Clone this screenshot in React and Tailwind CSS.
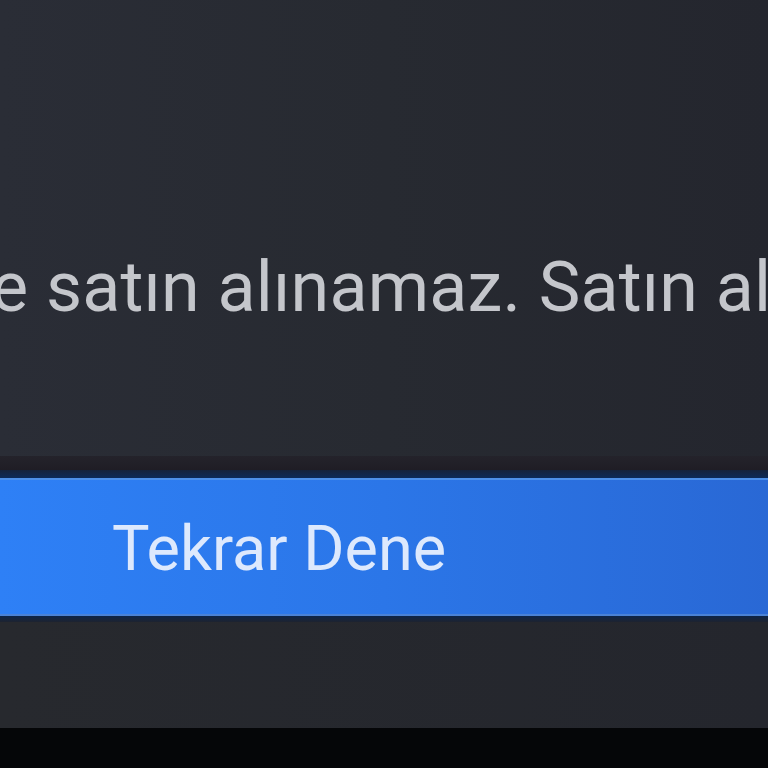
export default function App() {
  return (
    <div className="w-[768px] h-[768px] overflow-hidden flex flex-col bg-[#050608] font-['Roboto',sans-serif]">
      <div className="h-[456px] overflow-hidden bg-gradient-to-r from-[#2a2d36] via-[#272a31] to-[#24262e] pt-[252px]">
        <p className="ml-[-9px] whitespace-nowrap text-[70px] leading-none tracking-[0.2px] text-[#c4c6cb]">
          e satın alınamaz. Satın al
        </p>
      </div>
      <div className="h-[14px] bg-gradient-to-b from-[#24232b] to-[#1f1d25]" />
      <div className="h-[8px] bg-gradient-to-b from-[#14223c] to-[#0c2a58]" />
      <button className="h-[138px] w-full text-left border-t-2 border-b-2 border-t-[#4d8fe8] border-b-[#4a82d6] bg-gradient-to-r from-[#2e80f6] via-[#2b76e8] to-[#2968d5] pl-[112px] pt-[37px] flex items-start">
        <span className="text-[63px] leading-none text-[#dde9fd]">Tekrar Dene</span>
      </button>
      <div className="h-[6px] bg-gradient-to-b from-[#0c2448] to-[#1d2330]" />
      <div className="h-[106px] bg-gradient-to-r from-[#27292e] to-[#24262d]" />
      <div className="flex-1 bg-[#050608]" />
    </div>
  )
}
